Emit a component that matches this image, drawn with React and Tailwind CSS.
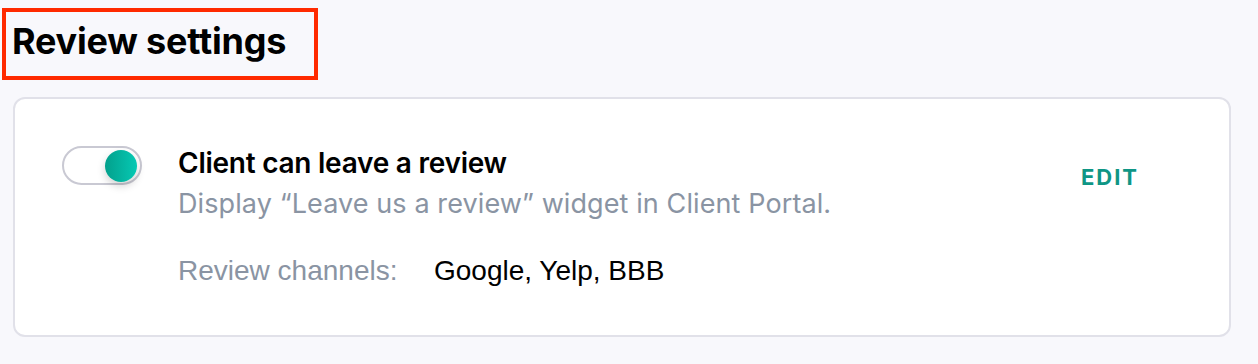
export default function App() {
  return (
    <div className="w-[1258px] h-[364px] bg-[#f8f8fc] pt-2 pl-[2px] font-['Inter',sans-serif]">
      <div className="w-[316px] h-[72px] border-4 border-[#ff2a00] pl-[6px] pt-[7px]">
        <h1 className="text-[36px] leading-[44px] font-bold text-black tracking-[-0.2px]">Review settings</h1>
      </div>
      <div className="mt-[17px] ml-[11px] w-[1218px] h-[240px] bg-white border-2 border-[#e1e1e9] rounded-xl flex items-start pt-[47px] pl-[47px] pr-[90px]">
        <div className="w-[80px] h-[39px] shrink-0 rounded-full border-2 border-[#c9c9d3] bg-white flex items-center justify-end pr-[3px]">
          <div className="w-[32px] h-[32px] rounded-full bg-gradient-to-r from-[#03a08c] to-[#06c9b4] shadow-[0_4px_8px_rgba(0,0,0,0.18)]" />
        </div>
        <div className="ml-[36px] flex-1">
          <div className="text-[28px] leading-[34px] font-semibold text-black tracking-[-0.25px]">Client can leave a review</div>
          <div className="text-[27px] leading-[34px] text-[#8a94a3] mt-[7px] tracking-[0.1px]">Display “Leave us a review” widget in Client Portal.</div>
          <div className="flex mt-[34px] text-[28px] leading-[32px] font-['Liberation_Sans',sans-serif]">
            <span className="w-[256px] text-[#8a94a3]">Review channels:</span>
            <span className="text-black">Google, Yelp, BBB</span>
          </div>
        </div>
        <button className="mt-[16px] h-[30px] leading-[30px] text-[22px] font-bold tracking-[2px] text-[#0f9685]">EDIT</button>
      </div>
    </div>
  );
}
